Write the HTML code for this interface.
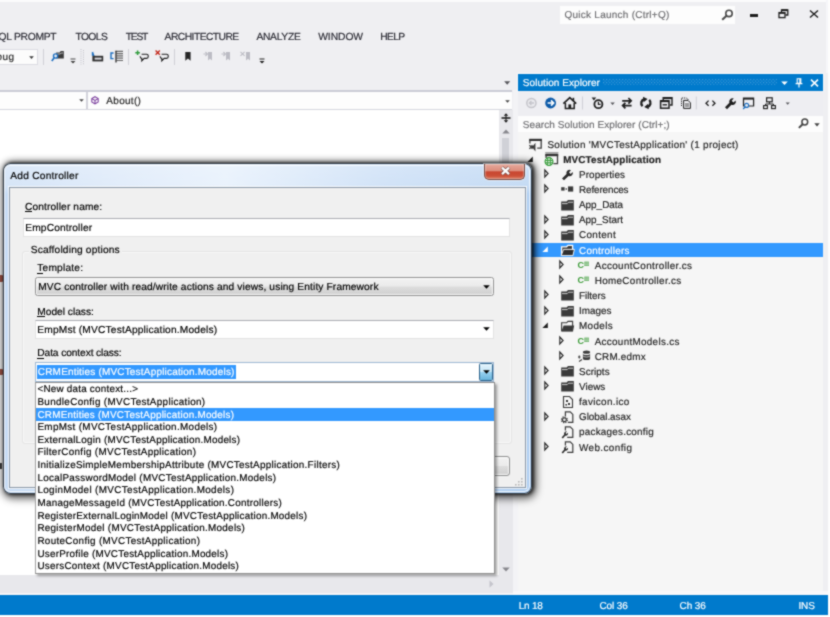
<!DOCTYPE html>
<html><head><meta charset="utf-8"><title>Add Controller</title>
<style>
html,body{margin:0;padding:0;}
body{width:830px;height:617px;position:relative;overflow:hidden;background:#efeff2;font-family:"Liberation Sans",sans-serif;}
.t{position:absolute;white-space:pre;font-family:"Liberation Sans",sans-serif;display:block;-webkit-text-stroke:0.18px currentColor;text-rendering:geometricPrecision;}
.b{position:absolute;}
.a{position:absolute;overflow:visible;}
#wrap{position:absolute;left:0;top:0;width:830px;height:617px;background:#efeff2;overflow:hidden;filter:url(#soft);}
</style></head><body><div id="wrap">
<svg width="0" height="0" style="position:absolute">
<defs>
<filter id="soft" x="0" y="0" width="100%" height="100%" color-interpolation-filters="sRGB"><feConvolveMatrix order="3" kernelMatrix="0.04 0.1 0.04 0.1 0.44 0.1 0.04 0.1 0.04" divisor="1" edgeMode="duplicate" preserveAlpha="true"/></filter>
<g id="i-folder"><path d="M1.2 3.6 H6.6 L8 2 H13.8 V12.4 H1.2 Z" fill="#3a3a3a"/><path d="M2 5.6 H7.2 L8.6 4.2 H13" stroke="#f6f6f6" stroke-width="0.8" fill="none"/></g>
<g id="i-folderopen"><path d="M1.6 3.8 H6.6 L8 2.4 H12.6 V11.8 H1.6 Z" fill="#f6f6f6" stroke="#3a3a3a" stroke-width="1.1"/><path d="M3.6 6.4 H14.2 L12.8 12.4 H1.4 Z" fill="#3a3a3a"/></g>
<g id="i-folderopensel"><path d="M1.6 3.8 H6.6 L8 2.4 H12.6 V11.8 H1.6 Z" fill="#3a3a3a" stroke="#ffffff" stroke-width="1.3"/><path d="M3.6 6.4 H14.4 L12.9 12.6 H1.2 Z" fill="#2f2f2f" stroke="#ffffff" stroke-width="0.9"/></g>
<g id="i-cs"><text x="0.6" y="10.4" font-family="Liberation Sans" font-weight="700" font-size="9" fill="#3a9a36">C</text><rect x="7.4" y="3.6" width="4.4" height="4.4" fill="#3a9a36" opacity="0.85"/><path d="M8.9 3.6 v4.4 M10.3 3.6 v4.4 M7.4 5.1 h4.4 M7.4 6.5 h4.4" stroke="#f6f6f6" stroke-width="0.45" opacity="0.8"/></g>
<g id="i-wrench"><path d="M2 11.5 L6.5 7 A3.2 3.2 0 0 1 11 3.2 L9 5.3 L10.6 6.9 L12.7 4.9 A3.2 3.2 0 0 1 8.6 9 L4 13.3 Z" fill="#2b2b2b"/></g>
<g id="i-refs"><rect x="1.2" y="5.2" width="3.4" height="3.4" fill="#3b3b3b"/><rect x="5.6" y="6.3" width="1.4" height="1.4" fill="#3b3b3b"/><rect x="8" y="4.4" width="5.2" height="5.2" fill="#3b3b3b"/></g>
<g id="i-sln"><path d="M1.9 6.4 V2.6 H13.2 V11.2 H9.2" fill="none" stroke="#3b3b3b" stroke-width="1.3"/><path d="M1.3 2.9 H13.8" stroke="#333" stroke-width="2.2"/><path d="M1.4 8.2 L3.4 10 L1.4 11.8 M3.6 11.8 L6.8 7.6 V12.6 L3.6 8.2" fill="none" stroke="#333" stroke-width="1.25"/></g>
<g id="i-proj"><path d="M1.2 0.5 H14.4" stroke="#9a9a9a" stroke-width="0.9"/><path d="M2.1 6 V2.6 H13.5 V11.6 H9.4" fill="none" stroke="#3b3b3b" stroke-width="1.3"/><path d="M1.4 2.9 H14.2" stroke="#333" stroke-width="2.6"/><circle cx="5" cy="9.6" r="3.9" fill="#f6f6f6" stroke="#2f9a33" stroke-width="1.2"/><path d="M1.2 8.4 H8.8 M1.2 10.8 H8.8 M3.7 6 V13.2 M6.3 6 V13.2" stroke="#2f9a33" stroke-width="0.95" fill="none"/></g>
<g id="i-ico"><path d="M3.5 1.5 h6 l3 3 v8 h-9 z" fill="#f6f6f6" stroke="#3b3b3b" stroke-width="1.1"/><rect x="6" y="5" width="2" height="2" fill="#3b3b3b"/><rect x="8" y="8" width="2" height="2" fill="#3b3b3b"/><rect x="5.4" y="9" width="1.6" height="1.6" fill="#3b3b3b"/></g>
<g id="i-asax"><path d="M5.4 6 V1.8 h4.8 l2.6 2.6 v8 h-5" fill="none" stroke="#3b3b3b" stroke-width="1.2"/><circle cx="4.4" cy="9.8" r="2.9" fill="none" stroke="#3b3b3b" stroke-width="1.3" stroke-dasharray="1.2 1.07"/><circle cx="4.4" cy="9.8" r="1.9" fill="none" stroke="#3b3b3b" stroke-width="1.2"/></g>
<g id="i-config"><path d="M5.4 5.6 V1.8 h4.8 l2.6 2.6 v8 h-5.6" fill="none" stroke="#3b3b3b" stroke-width="1.2"/><path d="M1.6 12.4 L4.2 9.6 A2.4 2.4 0 0 1 6.8 6.4 L5.5 7.9 L6.5 9 L8 7.8 A2.4 2.4 0 0 1 5.2 10.8 L2.9 13.4 Z" fill="#2b2b2b"/></g>
<g id="i-edmx"><ellipse cx="9.5" cy="3.2" rx="3.6" ry="1.6" fill="#3b3b3b"/><path d="M5.9 4.4 v5 a3.6 1.6 0 0 0 7.2 0 v-5 a3.6 1.6 0 0 1 -7.2 0" fill="#3b3b3b"/><path d="M5.9 6.6 a3.6 1.4 0 0 0 7.2 0" stroke="#f6f6f6" stroke-width="0.7" fill="none"/><path d="M1 8 l2.5 0 m-1.2 -1.5 v3 M2 12.5 l3 -2" stroke="#3b3b3b" stroke-width="1.1"/></g>
</defs></svg>

<!-- top strip -->
<div class="b" style="left:-6px;top:-6px;width:842px;height:8px;background:#fbfbfc"></div>
<div class="b" style="left:828px;top:-6px;width:8px;height:629px;background:#fdfdfd;z-index:50"></div>

<div class="b" style="left:825.6px;top:0;width:3px;height:73px;background:#f6f6f9"></div>
<!-- quick launch -->
<div class="b" style="left:560px;top:6px;width:175px;height:18px;background:#fdfdfd"></div>
<svg class="a" style="left:720.6px;top:9.2px" width="13" height="12" viewBox="0 0 13 12"><circle cx="8" cy="4.4" r="3.2" fill="none" stroke="#4a4a4a" stroke-width="1.6"/><path d="M5.6 6.8 L1.2 10.8" stroke="#4a4a4a" stroke-width="2.1"/></svg>
<!-- window buttons -->
<div class="b" style="left:750px;top:13.9px;width:8.4px;height:3.2px;background:#1e1e1e"></div>
<svg class="a" style="left:778px;top:9px" width="11" height="10" viewBox="0 0 11 10"><path d="M3.5 3 V1 H9.8 V6 H7.5" fill="none" stroke="#1e1e1e" stroke-width="1.3"/><path d="M3.5 1.2 H9.8" stroke="#1e1e1e" stroke-width="1.8"/><rect x="1" y="3.6" width="6" height="5" fill="none" stroke="#1e1e1e" stroke-width="1.3"/><path d="M1 3.9 H7" stroke="#1e1e1e" stroke-width="1.8"/></svg>
<svg class="a" style="left:808.5px;top:10px" width="10" height="8" viewBox="0 0 10 8"><path d="M1 0.5 L9 7.5 M9 0.5 L1 7.5" stroke="#1e1e1e" stroke-width="1.4"/></svg>

<!-- toolbar -->
<div class="b" style="left:-6px;top:48.5px;width:43.5px;height:16px;background:#fcfcfc;border:1px solid #dcdce2;border-left:none;box-sizing:border-box"></div>
<svg class="a" style="left:29.3px;top:55.6px" width="6" height="4"><path d="M0.2 0.2 H4.8 L2.5 3 Z" fill="#3a3a3a"/></svg>
<div class="b" style="left:43.3px;top:48.5px;width:1px;height:16px;background:#cfcfd6"></div>
<!-- find in files icon -->
<svg class="a" style="left:51px;top:49px" width="14" height="14" viewBox="0 0 14 14"><path d="M5.2 3.4 H8.6 L9.8 2 H12.8 V9.6 H5.2 Z" fill="#3a3a3a"/><path d="M6.2 5 H9.2 L10.2 4 H12" stroke="#eeeef2" stroke-width="0.7" fill="none"/><circle cx="4.6" cy="7" r="2.1" fill="#eeeef2" stroke="#1d6fc0" stroke-width="1.4"/><path d="M3.2 8.8 L0.8 12" stroke="#1d6fc0" stroke-width="1.7"/></svg>
<svg class="a" style="left:70.4px;top:58px" width="6" height="7"><path d="M0.5 1 H5.5" stroke="#444" stroke-width="1"/><path d="M0.5 3 H5.5 L3 5.6 Z" fill="#444"/></svg>
<svg class="a" style="left:80px;top:48.5px" width="5" height="16"><path d="M1 0 V16 M3.5 1.1 V16" stroke="#c0c0c8" stroke-width="1" stroke-dasharray="1 1.2"/></svg>
<!-- icon 2 -->
<svg class="a" style="left:90.5px;top:50px" width="13" height="12" viewBox="0 0 13 12"><path d="M0.8 1.8 L3.8 5.8 L0.8 5.8 Z" fill="#1d6fc0"/><path d="M1.6 2 L2.6 6" stroke="#1d6fc0" stroke-width="1.2"/><rect x="1.4" y="5.8" width="10.8" height="5.6" fill="#2e2e2e"/><rect x="3.6" y="7.6" width="7" height="2" fill="#d8d8de"/></svg>
<!-- icon 3 -->
<svg class="a" style="left:109.5px;top:49.5px" width="14" height="13" viewBox="0 0 14 13"><path d="M3.6 3 H1 V8.6 H3.6" fill="none" stroke="#1d6fc0" stroke-width="1.4"/><path d="M5.6 1.3 H13 M6.4 3.6 H13 M6.4 5.9 H13 M6.4 8.2 H13 M6.4 10.5 H13" stroke="#666" stroke-width="1.2"/><path d="M6 0.8 V12.4" stroke="#2a2a2a" stroke-width="1.3"/></svg>
<div class="b" style="left:128px;top:48.5px;width:1px;height:16px;background:#cfcfd6"></div>
<!-- comment -->
<svg class="a" style="left:134.5px;top:49.5px" width="15" height="13" viewBox="0 0 15 13"><path d="M2.6 0.4 V5 M0.3 2.7 H4.9" stroke="#2d9a3a" stroke-width="1.5"/><path d="M6.6 4.2 H11.6 Q13.2 4.2 13.2 5.8 V6.8 Q13.2 8.4 11.6 8.4 H9.2 L6.8 10.8 V8.4 Q5.2 8.4 5.2 6.8 V6.2" fill="none" stroke="#1e1e1e" stroke-width="1.1"/></svg>
<!-- uncomment -->
<svg class="a" style="left:154.5px;top:49.5px" width="15" height="13" viewBox="0 0 15 13"><path d="M0.6 0.6 L4.8 4.8 M4.8 0.6 L0.6 4.8" stroke="#c3281c" stroke-width="1.4"/><path d="M6.6 4.2 H11.6 Q13.2 4.2 13.2 5.8 V6.8 Q13.2 8.4 11.6 8.4 H9.2 L6.8 10.8 V8.4 Q5.2 8.4 5.2 6.8 V6.2" fill="none" stroke="#1e1e1e" stroke-width="1.1"/></svg>
<div class="b" style="left:174px;top:48.5px;width:1px;height:16px;background:#cfcfd6"></div>
<!-- bookmark -->
<svg class="a" style="left:184.6px;top:51.8px" width="7" height="10"><path d="M0.3 0 H5.6 V8.8 L2.95 6.4 L0.3 8.8 Z" fill="#262626"/></svg>
<!-- disabled icons -->
<svg class="a" style="left:203px;top:51px" width="10" height="11" viewBox="0 0 10 11"><path d="M5 1 H9 V9.5 L7 7.8 L5 9.5 Z" fill="#bcbcc4"/><path d="M0.5 3 L4 3 M2.5 1 L4.4 3 L2.5 5" stroke="#bcbcc4" stroke-width="1.1" fill="none"/></svg>
<svg class="a" style="left:221px;top:51px" width="10" height="11" viewBox="0 0 10 11"><path d="M5 1 H9 V9.5 L7 7.8 L5 9.5 Z" fill="#bcbcc4"/><path d="M0.5 3 L4 3 M2.5 1 L4.4 3 L2.5 5" stroke="#bcbcc4" stroke-width="1.1" fill="none"/></svg>
<svg class="a" style="left:240px;top:51px" width="11" height="11" viewBox="0 0 11 11"><path d="M6 1 H10 V9.5 L8 7.8 L6 9.5 Z" fill="#bcbcc4"/><path d="M0.5 0.8 L4.6 4.8 M4.6 0.8 L0.5 4.8" stroke="#bcbcc4" stroke-width="1.1" fill="none"/></svg>
<svg class="a" style="left:258.5px;top:58px" width="6" height="6"><path d="M0.5 1 H5.5" stroke="#1e1e1e" stroke-width="1"/><path d="M0.5 3 H5.5 L3 5.6 Z" fill="#1e1e1e"/></svg>

<!-- doc tab dropdown arrow -->
<svg class="a" style="left:504px;top:80.6px" width="7" height="5"><path d="M0.2 0.3 H6.2 L3.2 3.8 Z" fill="#55555a"/></svg>

<!-- nav bar -->
<div class="b" style="left:-6px;top:89.6px;width:518.4px;height:2px;background:#cbccd6"></div>
<div class="b" style="left:-6px;top:91.6px;width:518.4px;height:17px;background:#fdfdfd"></div>
<div class="b" style="left:-6px;top:109px;width:518.4px;height:1px;background:#d6d7de"></div>
<div class="b" style="left:86px;top:91.6px;width:1.8px;height:17px;background:#d3d4dc"></div>
<svg class="a" style="left:78.9px;top:99.2px" width="6" height="4"><path d="M0.2 0.2 H4.8 L2.5 2.8 Z" fill="#444"/></svg>
<svg class="a" style="left:505.4px;top:99.5px" width="6" height="4"><path d="M0.2 0.2 H4.8 L2.5 2.8 Z" fill="#444"/></svg>
<svg class="a" style="left:90.5px;top:96px" width="8" height="9" viewBox="0 0 8 9"><path d="M4 0.7 L7.2 2.6 V6 L4 8 L0.8 6 V2.6 Z M0.8 2.6 L4 4.4 L7.2 2.6 M4 4.4 V8" fill="none" stroke="#7a3e9d" stroke-width="1.05"/></svg>

<!-- editor -->
<div class="b" style="left:-6px;top:110px;width:505px;height:465.4px;background:#ffffff"></div>
<!-- editor vertical scrollbar -->
<div class="b" style="left:499px;top:110px;width:14px;height:465.4px;background:#e8e8ec"></div>
<svg class="a" style="left:500.5px;top:112.5px" width="10" height="10" viewBox="0 0 10 10"><path d="M0.5 5 H9.5" stroke="#1e1e1e" stroke-width="1.6"/><path d="M5 0.3 L7.3 2.8 H2.7 Z M5 9.7 L7.3 7.2 H2.7 Z" fill="#1e1e1e"/><path d="M5 2 V8" stroke="#1e1e1e" stroke-width="1.1"/></svg>
<svg class="a" style="left:501.5px;top:128.5px" width="8" height="5"><path d="M0.3 4.5 H7.7 L4 0.5 Z" fill="#86868c"/></svg>
<div class="b" style="left:502px;top:138px;width:7px;height:60px;background:#d0d1d7"></div>
<svg class="a" style="left:501.5px;top:566.7px" width="8" height="5"><path d="M0.3 0.5 H7.7 L4 4.5 Z" fill="#86868c"/></svg>
<!-- editor bottom (h scrollbar) -->
<div class="b" style="left:-6px;top:575.4px;width:519px;height:20.2px;background:#e8e8ec"></div>
<svg class="a" style="left:488.5px;top:579.5px" width="5" height="8"><path d="M0.5 0.3 V7.7 L4.5 4 Z" fill="#c4c4cb"/></svg>
<!-- left code fragments -->
<div class="b" style="left:-2px;top:274.5px;width:4.5px;height:7px;background:#a85a4c;border-radius:1px"></div>
<div class="b" style="left:-2px;top:368.5px;width:4.5px;height:6px;background:#a85a4c;border-radius:1px"></div>
<div class="b" style="left:0;top:463px;width:1.5px;height:6px;background:#444"></div>

<div class="b" style="left:512.6px;top:90px;width:5.2px;height:505px;background:#f3f3f6"></div>
<!-- Solution Explorer -->
<div class="b" style="left:517.6px;top:73px;width:305.8px;height:522.6px;background:#f6f6f6"></div>
<div class="b" style="left:518.2px;top:73.5px;width:304.8px;height:17px;background:#007acc;box-shadow:0 0 0 0.8px #f7f9fc"></div>
<svg class="a" style="left:603px;top:79.4px" width="174" height="6"><defs><pattern id="dots" width="3.2" height="3.2" patternUnits="userSpaceOnUse"><rect x="0" y="0" width="1" height="1" fill="#4c9fd9"/><rect x="1.6" y="1.6" width="1" height="1" fill="#4c9fd9"/></pattern></defs><rect width="174" height="6" fill="url(#dots)"/></svg>
<svg class="a" style="left:780.5px;top:80.5px" width="7" height="5"><path d="M0.2 0.4 H6.8 L3.5 4 Z" fill="#fff"/></svg>
<svg class="a" style="left:794.5px;top:77.5px" width="8" height="10" viewBox="0 0 8 10"><path d="M2.2 0.8 H5.8 V5.4 H2.2 Z" fill="none" stroke="#fff" stroke-width="1.1"/><path d="M5 0.8 V5.4" stroke="#fff" stroke-width="1.4"/><path d="M0.6 5.6 H7.4 M4 5.6 V9.6" stroke="#fff" stroke-width="1.2"/></svg>
<svg class="a" style="left:809.5px;top:78.5px" width="9" height="8"><path d="M1 0.6 L8 7.4 M8 0.6 L1 7.4" stroke="#fff" stroke-width="1.6"/></svg>
<!-- SE toolbar -->
<div class="b" style="left:517.6px;top:90.6px;width:305.8px;height:25.6px;background:#eeeef2"></div>
<svg class="a" style="left:525px;top:96px" width="270" height="14" viewBox="0 0 270 14">
 <!-- back (disabled) -->
 <circle cx="6.4" cy="7" r="4.6" fill="#eaeaee" stroke="#c4c4ca" stroke-width="1.5"/><path d="M9 7 H4.6 M6.4 5 L4.4 7 L6.4 9" stroke="#c4c4ca" stroke-width="1.3" fill="none"/>
 <!-- forward -->
 <circle cx="25.6" cy="7" r="5.4" fill="#0c5aa8"/><path d="M22.6 7 H28 M26 4.4 L28.6 7 L26 9.6" stroke="#fff" stroke-width="1.7" fill="none"/>
 <!-- home -->
 <path d="M38.4 7.6 L44.8 1.6 L51.2 7.6" fill="none" stroke="#1e1e1e" stroke-width="1.7"/><path d="M40.4 7 V12.6 H49.2 V7" fill="none" stroke="#1e1e1e" stroke-width="1.5"/><path d="M48.4 1.8 V5" stroke="#1e1e1e" stroke-width="1.6"/><rect x="43.4" y="8.4" width="2.8" height="4.2" fill="#1e1e1e"/>
 <path d="M57.5 0.5 V13.5" stroke="#cfcfd6" stroke-width="1"/>
 <!-- clock -->
 <circle cx="73.4" cy="8.2" r="4" fill="none" stroke="#1e1e1e" stroke-width="1.8"/><path d="M73.4 5.8 V8.4 H75.6" stroke="#1e1e1e" stroke-width="1.2" fill="none"/><path d="M66.6 1.6 L71.2 1.6 L68.9 4.6 Z" fill="#1e1e1e"/>
 <path d="M85.4 6.6 H89.8 L87.6 9 Z" fill="#55555a"/>
 <!-- sync -->
 <path d="M97.2 4.8 H106 M103.4 2 L106.2 4.8 L103.4 7.6 M106.6 9.6 H97.8 M100.4 6.8 L97.6 9.6 L100.4 12.4" fill="none" stroke="#1e1e1e" stroke-width="1.7"/>
 <!-- refresh -->
 <path d="M117.6 10.2 A4.1 4.1 0 0 1 119.4 3.2 M124.2 3.8 A4.1 4.1 0 0 1 122.4 10.8" fill="none" stroke="#1e1e1e" stroke-width="2.3"/><path d="M118 0.8 L122.6 3 L118.6 6.2 Z M123.8 13.2 L119.2 11 L123.2 7.8 Z" fill="#1e1e1e"/>
 <!-- collapse all -->
 <path d="M138.2 4 V1.8 H147 V9 H145" fill="none" stroke="#1e1e1e" stroke-width="1.4"/><path d="M138.2 2.2 H147" stroke="#1e1e1e" stroke-width="1.8"/><rect x="135.6" y="4.8" width="8.4" height="7.4" fill="#eeeef2" stroke="#1e1e1e" stroke-width="1.5"/><path d="M135.6 5.2 H144" stroke="#1e1e1e" stroke-width="1.9"/><path d="M137.6 8.8 H142" stroke="#1e1e1e" stroke-width="1.4"/>
 <!-- show all files -->
 <path d="M156.5 10 V2 H161.5 L163.5 4" fill="none" stroke="#1e1e1e" stroke-width="1" stroke-dasharray="1.2 0.9"/><path d="M158.6 4.4 H163 L165.4 6.8 V12.4 H158.6 Z" fill="none" stroke="#1e1e1e" stroke-width="1"/><path d="M160 8 H164 M160 10 H164" stroke="#1e1e1e" stroke-width="0.8"/>
 <path d="M171.3 0.5 V13.5" stroke="#cfcfd6" stroke-width="1"/>
 <!-- code <> -->
 <path d="M183.6 4.6 L181 7.2 L183.6 9.8 M187.4 4.6 L190 7.2 L187.4 9.8" fill="none" stroke="#1e1e1e" stroke-width="1.3"/>
 <!-- wrench -->
 <path d="M200 11.2 L204.4 6.8 A3.3 3.3 0 0 1 208.8 2.6 L206.6 4.8 L208.4 6.6 L210.6 4.4 A3.3 3.3 0 0 1 206.4 8.8 L202 13.2 Z" fill="#1e1e1e"/>
 <!-- preview -->
 <path d="M218.5 10.5 V2.2 H228.6 V10 H224" fill="none" stroke="#1e1e1e" stroke-width="1.2"/><path d="M218.5 2.8 H228.6" stroke="#1e1e1e" stroke-width="1.6"/><circle cx="221.6" cy="9.4" r="2" fill="#eeeef2" stroke="#1d6fc0" stroke-width="1.1"/><path d="M220.2 10.8 L218.2 13" stroke="#1d6fc0" stroke-width="1.3"/>
 <!-- class diagram -->
 <rect x="241.6" y="1.8" width="5.6" height="4" fill="none" stroke="#1e1e1e" stroke-width="1.2"/><path d="M244.4 5.8 V8 M240.6 10 V8 H248.4 V10" fill="none" stroke="#1e1e1e" stroke-width="1"/><rect x="238.6" y="9.6" width="3.8" height="3" fill="none" stroke="#1e1e1e" stroke-width="1.1"/><rect x="246.6" y="9.6" width="3.8" height="3" fill="none" stroke="#1e1e1e" stroke-width="1.1"/>
 <path d="M260.6 6.4 H264.8 L262.7 8.8 Z" fill="#55555a"/>
</svg>
<!-- SE search -->
<div class="b" style="left:518.2px;top:116.2px;width:304.8px;height:16px;background:#fdfdfd"></div>
<svg class="a" style="left:798.4px;top:118.4px" width="11" height="11" viewBox="0 0 11 11"><circle cx="6.8" cy="4" r="2.9" fill="none" stroke="#444" stroke-width="1.5"/><path d="M4.6 6.2 L0.9 9.9" stroke="#444" stroke-width="2"/></svg>
<svg class="a" style="left:813.8px;top:123px" width="6" height="4"><path d="M0.3 0.3 H5.7 L3 3.4 Z" fill="#444"/></svg>
<!-- selected row -->
<div class="b" style="left:518.7px;top:242.6px;width:304.6px;height:14.8px;background:#3399ff"></div>
<svg class="a" style="left:528.3px;top:136.9px" width="16" height="14" viewBox="0 0 16 14"><use href="#i-sln"/></svg>
<svg class="a" style="left:526.6px;top:155.5px" width="8" height="8" viewBox="0 0 8 8"><path d="M5.8 0.6 L5.8 6 L0.4 6 Z" fill="#1e1e1e"/></svg>
<svg class="a" style="left:544.0px;top:152.1px" width="16" height="14" viewBox="0 0 16 14"><use href="#i-proj"/></svg>
<svg class="a" style="left:543.6px;top:169.2px" width="6" height="10" viewBox="0 0 6 10"><path d="M0.8 1.0 L4.1 4.5 L0.8 8.0 Z" fill="#f6f6f6" stroke="#2a2a2a" stroke-width="1.15"/></svg>
<svg class="a" style="left:560.3px;top:167.2px" width="16" height="14" viewBox="0 0 16 14"><use href="#i-wrench"/></svg>
<svg class="a" style="left:543.6px;top:184.4px" width="6" height="10" viewBox="0 0 6 10"><path d="M0.8 1.0 L4.1 4.5 L0.8 8.0 Z" fill="#f6f6f6" stroke="#2a2a2a" stroke-width="1.15"/></svg>
<svg class="a" style="left:560.3px;top:182.4px" width="16" height="14" viewBox="0 0 16 14"><use href="#i-refs"/></svg>
<svg class="a" style="left:560.3px;top:197.5px" width="16" height="14" viewBox="0 0 16 14"><use href="#i-folder"/></svg>
<svg class="a" style="left:543.6px;top:214.7px" width="6" height="10" viewBox="0 0 6 10"><path d="M0.8 1.0 L4.1 4.5 L0.8 8.0 Z" fill="#f6f6f6" stroke="#2a2a2a" stroke-width="1.15"/></svg>
<svg class="a" style="left:560.3px;top:212.7px" width="16" height="14" viewBox="0 0 16 14"><use href="#i-folder"/></svg>
<svg class="a" style="left:543.6px;top:229.8px" width="6" height="10" viewBox="0 0 6 10"><path d="M0.8 1.0 L4.1 4.5 L0.8 8.0 Z" fill="#f6f6f6" stroke="#2a2a2a" stroke-width="1.15"/></svg>
<svg class="a" style="left:560.3px;top:227.8px" width="16" height="14" viewBox="0 0 16 14"><use href="#i-folder"/></svg>
<svg class="a" style="left:542.3px;top:246.4px" width="8" height="8" viewBox="0 0 8 8"><path d="M5.8 0.6 L5.8 6 L0.4 6 Z" fill="#ffffff"/></svg>
<svg class="a" style="left:560.3px;top:243.0px" width="16" height="14" viewBox="0 0 16 14"><use href="#i-folderopensel"/></svg>
<svg class="a" style="left:559.3px;top:260.1px" width="6" height="10" viewBox="0 0 6 10"><path d="M0.8 1.0 L4.1 4.5 L0.8 8.0 Z" fill="#f6f6f6" stroke="#2a2a2a" stroke-width="1.15"/></svg>
<svg class="a" style="left:576.6px;top:258.1px" width="16" height="14" viewBox="0 0 16 14"><use href="#i-cs"/></svg>
<svg class="a" style="left:559.3px;top:275.3px" width="6" height="10" viewBox="0 0 6 10"><path d="M0.8 1.0 L4.1 4.5 L0.8 8.0 Z" fill="#f6f6f6" stroke="#2a2a2a" stroke-width="1.15"/></svg>
<svg class="a" style="left:576.6px;top:273.3px" width="16" height="14" viewBox="0 0 16 14"><use href="#i-cs"/></svg>
<svg class="a" style="left:543.6px;top:290.4px" width="6" height="10" viewBox="0 0 6 10"><path d="M0.8 1.0 L4.1 4.5 L0.8 8.0 Z" fill="#f6f6f6" stroke="#2a2a2a" stroke-width="1.15"/></svg>
<svg class="a" style="left:560.3px;top:288.4px" width="16" height="14" viewBox="0 0 16 14"><use href="#i-folder"/></svg>
<svg class="a" style="left:543.6px;top:305.6px" width="6" height="10" viewBox="0 0 6 10"><path d="M0.8 1.0 L4.1 4.5 L0.8 8.0 Z" fill="#f6f6f6" stroke="#2a2a2a" stroke-width="1.15"/></svg>
<svg class="a" style="left:560.3px;top:303.6px" width="16" height="14" viewBox="0 0 16 14"><use href="#i-folder"/></svg>
<svg class="a" style="left:542.3px;top:322.2px" width="8" height="8" viewBox="0 0 8 8"><path d="M5.8 0.6 L5.8 6 L0.4 6 Z" fill="#1e1e1e"/></svg>
<svg class="a" style="left:560.3px;top:318.8px" width="16" height="14" viewBox="0 0 16 14"><use href="#i-folderopen"/></svg>
<svg class="a" style="left:559.3px;top:335.9px" width="6" height="10" viewBox="0 0 6 10"><path d="M0.8 1.0 L4.1 4.5 L0.8 8.0 Z" fill="#f6f6f6" stroke="#2a2a2a" stroke-width="1.15"/></svg>
<svg class="a" style="left:576.6px;top:333.9px" width="16" height="14" viewBox="0 0 16 14"><use href="#i-cs"/></svg>
<svg class="a" style="left:559.3px;top:351.1px" width="6" height="10" viewBox="0 0 6 10"><path d="M0.8 1.0 L4.1 4.5 L0.8 8.0 Z" fill="#f6f6f6" stroke="#2a2a2a" stroke-width="1.15"/></svg>
<svg class="a" style="left:576.6px;top:349.1px" width="16" height="14" viewBox="0 0 16 14"><use href="#i-edmx"/></svg>
<svg class="a" style="left:543.6px;top:366.2px" width="6" height="10" viewBox="0 0 6 10"><path d="M0.8 1.0 L4.1 4.5 L0.8 8.0 Z" fill="#f6f6f6" stroke="#2a2a2a" stroke-width="1.15"/></svg>
<svg class="a" style="left:560.3px;top:364.2px" width="16" height="14" viewBox="0 0 16 14"><use href="#i-folder"/></svg>
<svg class="a" style="left:543.6px;top:381.4px" width="6" height="10" viewBox="0 0 6 10"><path d="M0.8 1.0 L4.1 4.5 L0.8 8.0 Z" fill="#f6f6f6" stroke="#2a2a2a" stroke-width="1.15"/></svg>
<svg class="a" style="left:560.3px;top:379.4px" width="16" height="14" viewBox="0 0 16 14"><use href="#i-folder"/></svg>
<svg class="a" style="left:560.3px;top:394.5px" width="16" height="14" viewBox="0 0 16 14"><use href="#i-ico"/></svg>
<svg class="a" style="left:543.6px;top:411.7px" width="6" height="10" viewBox="0 0 6 10"><path d="M0.8 1.0 L4.1 4.5 L0.8 8.0 Z" fill="#f6f6f6" stroke="#2a2a2a" stroke-width="1.15"/></svg>
<svg class="a" style="left:560.3px;top:409.7px" width="16" height="14" viewBox="0 0 16 14"><use href="#i-asax"/></svg>
<svg class="a" style="left:560.3px;top:424.8px" width="16" height="14" viewBox="0 0 16 14"><use href="#i-config"/></svg>
<svg class="a" style="left:543.6px;top:442.0px" width="6" height="10" viewBox="0 0 6 10"><path d="M0.8 1.0 L4.1 4.5 L0.8 8.0 Z" fill="#f6f6f6" stroke="#2a2a2a" stroke-width="1.15"/></svg>
<svg class="a" style="left:560.3px;top:440.0px" width="16" height="14" viewBox="0 0 16 14"><use href="#i-config"/></svg>

<div class="b" style="left:513px;top:590.5px;width:315px;height:5px;background:#f8f8fa"></div>
<div class="b" style="left:-6px;top:593.4px;width:519px;height:2px;background:#f4f4f7"></div>
<!-- status bar -->
<div class="b" style="left:-6px;top:595.3px;width:834px;height:19.3px;background:#007acc"></div>
<div class="b" style="left:-6px;top:614.6px;width:842px;height:9px;background:#fdfdfd"></div>

<!-- ============ dialog ============ -->
<div class="b" id="dlg" style="left:2.9px;top:163.3px;width:528.7px;height:330.6px;box-sizing:border-box;border:1.4px solid rgba(38,48,58,.92);border-radius:7.5px;background:linear-gradient(180deg,rgba(255,255,255,.38) 0px,rgba(255,255,255,.28) 22px,rgba(255,255,255,0) 30px),linear-gradient(90deg,#c6dbf4 0%,#d6e5f8 22%,#e1edfb 42%,#c0d8f4 72%,#aecdf0 100%);box-shadow:1.5px 0 3px 0.5px rgba(0,0,0,.6), 1.5px 0 7px 1.5px rgba(0,0,0,.4), 2px 3px 9px 2px rgba(0,0,0,.45);"></div>
<div class="b" style="left:4.3px;top:164.7px;width:525.9px;height:327.8px;border-radius:6px;box-shadow:inset 0 0 0 1px rgba(255,255,255,.7)"></div>
<!-- close button -->
<div class="b" style="left:484.2px;top:164px;width:40.8px;height:15.8px;border-radius:0 0 5px 5px;border:1px solid #744842;border-top:none;box-sizing:border-box;background:linear-gradient(180deg,#e6aa9d 0%,#dc8c7b 46%,#c8452f 52%,#cb4f37 78%,#dc7a5e 100%);box-shadow:inset 0 0 0 1px rgba(255,255,255,.3), 0 0 0 1px rgba(255,255,255,.45)"></div>
<svg class="a" style="left:500.3px;top:165.9px" width="11" height="10" viewBox="0 0 11 10"><path d="M1.9 1.5 L9.1 8.3 M9.1 1.5 L1.9 8.3" stroke="#6a4a46" stroke-width="3.6" /><path d="M2 1.6 L9 8.2 M9 1.6 L2 8.2" stroke="#fff" stroke-width="2.3"/></svg>
<!-- client -->
<div class="b" style="left:9.5px;top:188px;width:515.1px;height:299.2px;background:#f0f0f0;box-shadow:0 0 0 1px #8a98a8, 0 0 0 2px rgba(255,255,255,.75)"></div>
<!-- controller name textbox -->
<div class="b" style="left:23px;top:218px;width:487px;height:19px;background:#fff;border:1px solid #e3e3e3;border-top-color:#abadb3;box-sizing:border-box"></div>
<!-- group box -->
<div class="b" style="left:22px;top:250.5px;width:489.5px;height:193.5px;border:1px solid #e4e4e4;border-radius:3px;box-sizing:border-box;box-shadow:inset 0 0 0 1px #f8f8f8"></div>
<div class="b" style="left:28.5px;top:244px;width:93px;height:12px;background:#f0f0f0"></div>
<!-- template combo -->
<div class="b" style="left:35px;top:276.8px;width:458.8px;height:19.2px;border:1px solid #929292;border-radius:2.5px;box-sizing:border-box;background:linear-gradient(180deg,#f2f2f2 0%,#ebebeb 48%,#dddddd 52%,#cfcfcf 100%);box-shadow:inset 0 0 0 1px rgba(255,255,255,.8)"></div>
<svg class="a" style="left:482.8px;top:284.8px" width="7" height="4"><path d="M0.2 0.2 H6.8 L3.5 3.8 Z" fill="#000"/></svg>
<!-- model class combo -->
<div class="b" style="left:35px;top:320px;width:458.8px;height:18.6px;background:#fff;border:1px solid #e3e3e3;border-top-color:#abadb3;box-sizing:border-box"></div>
<svg class="a" style="left:482.8px;top:327.4px" width="7" height="4"><path d="M0.2 0.2 H6.8 L3.5 3.8 Z" fill="#000"/></svg>
<!-- data context combo -->
<div class="b" style="left:35px;top:362px;width:458.8px;height:19.6px;background:#fff;border:1px solid #9fb9d4;box-sizing:border-box"></div>
<div class="b" style="left:37px;top:365px;width:198.6px;height:13.6px;background:#3399ff"></div>
<div class="b" style="left:479.4px;top:363px;width:13.4px;height:18px;border:1px solid #2c628b;border-radius:1.5px;box-sizing:border-box;background:linear-gradient(180deg,#e5f4fc 0%,#c4e5f6 48%,#98d1ef 52%,#68b3db 100%)"></div>
<svg class="a" style="left:482.8px;top:370px" width="7" height="4"><path d="M0.2 0.2 H6.8 L3.5 3.8 Z" fill="#000"/></svg>
<!-- underlines for accelerators -->
<div class="b" style="left:25.2px;top:211.2px;width:6.4px;height:1px;background:#000"></div>
<div class="b" style="left:37.4px;top:272.8px;width:5.2px;height:1px;background:#000"></div>
<div class="b" style="left:37.4px;top:315.8px;width:8px;height:1px;background:#000"></div>
<div class="b" style="left:37.4px;top:357.8px;width:6.6px;height:1px;background:#000"></div>
<!-- button (partly hidden) -->
<div class="b" style="left:440px;top:456px;width:70.4px;height:20.4px;border:1px solid #8e8f8f;border-radius:3px;box-sizing:border-box;background:linear-gradient(180deg,#f2f2f2 0%,#ebebeb 48%,#dddddd 52%,#cfcfcf 100%);box-shadow:inset 0 0 0 1px rgba(255,255,255,.8)"></div>
<!-- resize grip -->
<svg class="a" style="left:513px;top:476px" width="11" height="11"><g fill="#b8b8b8"><rect x="8" y="2" width="1.6" height="1.6"/><rect x="5" y="5" width="1.6" height="1.6"/><rect x="8" y="5" width="1.6" height="1.6"/><rect x="2" y="8" width="1.6" height="1.6"/><rect x="5" y="8" width="1.6" height="1.6"/><rect x="8" y="8" width="1.6" height="1.6"/></g></svg>

<!-- dropdown list -->
<div class="b" style="left:35px;top:382px;width:460px;height:192.1px;background:#fff;border:1px solid #8f8f8f;border-left-color:#a2a2a2;box-sizing:border-box;z-index:20;box-shadow:1.5px 1.5px 2.5px rgba(0,0,0,.35)"></div>
<div class="b" style="left:36px;top:408px;width:458px;height:12.5px;background:#3399ff;z-index:21"></div>

<span class="t" style="left:-1.5px;top:31.0px;height:13px;line-height:13px;font-size:10.3px;letter-spacing:-0.274px;color:#2a2a33;">QL PROMPT</span>
<span class="t" style="left:75.4px;top:31.0px;height:13px;line-height:13px;font-size:10.3px;letter-spacing:-0.584px;color:#2a2a33;">TOOLS</span>
<span class="t" style="left:125.8px;top:31.0px;height:13px;line-height:13px;font-size:10.3px;letter-spacing:-1.282px;color:#2a2a33;">TEST</span>
<span class="t" style="left:164.6px;top:31.0px;height:13px;line-height:13px;font-size:10.3px;letter-spacing:-0.548px;color:#2a2a33;">ARCHITECTURE</span>
<span class="t" style="left:256.4px;top:31.0px;height:13px;line-height:13px;font-size:10.3px;letter-spacing:-0.296px;color:#2a2a33;">ANALYZE</span>
<span class="t" style="left:318.2px;top:31.0px;height:13px;line-height:13px;font-size:10.3px;letter-spacing:-0.065px;color:#2a2a33;">WINDOW</span>
<span class="t" style="left:380.3px;top:31.0px;height:13px;line-height:13px;font-size:10.3px;letter-spacing:-0.652px;color:#2a2a33;">HELP</span>
<span class="t" style="left:-3.6px;top:51.0px;height:13px;line-height:13px;font-size:10.0px;letter-spacing:0.504px;color:#1e1e1e;">bug</span>
<span class="t" style="left:106.3px;top:95.0px;height:13px;line-height:13px;font-size:10.0px;letter-spacing:0.300px;color:#1e1e1e;">About()</span>
<span class="t" style="left:564.5px;top:9.0px;height:13px;line-height:13px;font-size:10.0px;letter-spacing:0.249px;color:#6d6d70;">Quick Launch (Ctrl+Q)</span>
<span class="t" style="left:522.8px;top:77.0px;height:13px;line-height:13px;font-size:10.0px;letter-spacing:0.061px;color:#ffffff;">Solution Explorer</span>
<span class="t" style="left:522.8px;top:119.0px;height:13px;line-height:13px;font-size:10.0px;letter-spacing:0.081px;color:#6d6d70;">Search Solution Explorer (Ctrl+;)</span>
<span class="t" style="left:547.4px;top:139.0px;height:13px;line-height:13px;font-size:9.9px;letter-spacing:0.330px;color:#1e1e1e;">Solution 'MVCTestApplication' (1 project)</span>
<span class="t" style="left:563.2px;top:154.0px;height:13px;line-height:13px;font-size:9.9px;font-weight:700;letter-spacing:0.151px;color:#1e1e1e;">MVCTestApplication</span>
<span class="t" style="left:579.0px;top:169.0px;height:13px;line-height:13px;font-size:9.9px;letter-spacing:0.103px;color:#1e1e1e;">Properties</span>
<span class="t" style="left:579.0px;top:184.0px;height:13px;line-height:13px;font-size:9.9px;letter-spacing:-0.105px;color:#1e1e1e;">References</span>
<span class="t" style="left:579.0px;top:199.0px;height:13px;line-height:13px;font-size:9.9px;letter-spacing:0.016px;color:#1e1e1e;">App_Data</span>
<span class="t" style="left:579.0px;top:214.0px;height:13px;line-height:13px;font-size:9.9px;letter-spacing:0.014px;color:#1e1e1e;">App_Start</span>
<span class="t" style="left:579.0px;top:229.0px;height:13px;line-height:13px;font-size:9.9px;letter-spacing:0.351px;color:#1e1e1e;">Content</span>
<span class="t" style="left:579.0px;top:245.0px;height:13px;line-height:13px;font-size:9.9px;letter-spacing:0.264px;color:#ffffff;">Controllers</span>
<span class="t" style="left:594.7px;top:260.0px;height:13px;line-height:13px;font-size:9.9px;letter-spacing:0.357px;color:#1e1e1e;">AccountController.cs</span>
<span class="t" style="left:594.7px;top:275.0px;height:13px;line-height:13px;font-size:9.9px;letter-spacing:0.333px;color:#1e1e1e;">HomeController.cs</span>
<span class="t" style="left:579.0px;top:290.0px;height:13px;line-height:13px;font-size:9.9px;letter-spacing:-0.020px;color:#1e1e1e;">Filters</span>
<span class="t" style="left:579.0px;top:305.0px;height:13px;line-height:13px;font-size:9.9px;letter-spacing:0.027px;color:#1e1e1e;">Images</span>
<span class="t" style="left:579.0px;top:320.0px;height:13px;line-height:13px;font-size:9.9px;letter-spacing:0.368px;color:#1e1e1e;">Models</span>
<span class="t" style="left:594.7px;top:336.0px;height:13px;line-height:13px;font-size:9.9px;letter-spacing:0.304px;color:#1e1e1e;">AccountModels.cs</span>
<span class="t" style="left:594.7px;top:351.0px;height:13px;line-height:13px;font-size:9.9px;letter-spacing:0.214px;color:#1e1e1e;">CRM.edmx</span>
<span class="t" style="left:579.0px;top:366.0px;height:13px;line-height:13px;font-size:9.9px;letter-spacing:0.066px;color:#1e1e1e;">Scripts</span>
<span class="t" style="left:579.0px;top:381.0px;height:13px;line-height:13px;font-size:9.9px;letter-spacing:0.036px;color:#1e1e1e;">Views</span>
<span class="t" style="left:579.0px;top:396.0px;height:13px;line-height:13px;font-size:9.9px;letter-spacing:0.363px;color:#1e1e1e;">favicon.ico</span>
<span class="t" style="left:579.0px;top:411.0px;height:13px;line-height:13px;font-size:9.9px;letter-spacing:-0.028px;color:#1e1e1e;">Global.asax</span>
<span class="t" style="left:579.0px;top:426.0px;height:13px;line-height:13px;font-size:9.9px;letter-spacing:0.238px;color:#1e1e1e;">packages.config</span>
<span class="t" style="left:579.0px;top:442.0px;height:13px;line-height:13px;font-size:9.9px;letter-spacing:0.412px;color:#1e1e1e;">Web.config</span>
<span class="t" style="left:10.3px;top:170.0px;height:13px;line-height:13px;font-size:10.2px;letter-spacing:0.227px;color:#000;">Add Controller</span>
<span class="t" style="left:25.0px;top:201.0px;height:13px;line-height:13px;font-size:10.2px;letter-spacing:0.124px;color:#000;">Controller name:</span>
<span class="t" style="left:25.3px;top:222.0px;height:13px;line-height:13px;font-size:10.2px;letter-spacing:0.144px;color:#000;">EmpController</span>
<span class="t" style="left:30.7px;top:244.0px;height:13px;line-height:13px;font-size:10.2px;letter-spacing:0.173px;color:#000;">Scaffolding options</span>
<span class="t" style="left:37.3px;top:262.0px;height:13px;line-height:13px;font-size:10.2px;letter-spacing:0.192px;color:#000;">Template:</span>
<span class="t" style="left:38.2px;top:281.0px;height:13px;line-height:13px;font-size:10.2px;letter-spacing:0.128px;color:#000;">MVC controller with read/write actions and views, using Entity Framework</span>
<span class="t" style="left:37.3px;top:306.0px;height:13px;line-height:13px;font-size:10.2px;letter-spacing:-0.010px;color:#000;">Model class:</span>
<span class="t" style="left:37.3px;top:324.0px;height:13px;line-height:13px;font-size:10.2px;letter-spacing:0.182px;color:#000;">EmpMst (MVCTestApplication.Models)</span>
<span class="t" style="left:37.3px;top:347.0px;height:13px;line-height:13px;font-size:10.2px;letter-spacing:-0.094px;color:#000;">Data context class:</span>
<span class="t" style="left:37.8px;top:366.0px;height:13px;line-height:13px;font-size:10.0px;letter-spacing:0.187px;color:#fff;">CRMEntities (MVCTestApplication.Models)</span>
<span class="t" style="left:37.4px;top:383.0px;height:13px;line-height:13px;font-size:9.9px;letter-spacing:0.225px;color:#000;z-index:30;">&lt;New data context...&gt;</span>
<span class="t" style="left:37.4px;top:396.0px;height:13px;line-height:13px;font-size:9.9px;letter-spacing:0.337px;color:#000;z-index:30;">BundleConfig (MVCTestApplication)</span>
<span class="t" style="left:37.4px;top:409.0px;height:13px;line-height:13px;font-size:9.9px;letter-spacing:0.250px;color:#fff;z-index:30;">CRMEntities (MVCTestApplication.Models)</span>
<span class="t" style="left:37.4px;top:421.0px;height:13px;line-height:13px;font-size:9.9px;letter-spacing:0.342px;color:#000;z-index:30;">EmpMst (MVCTestApplication.Models)</span>
<span class="t" style="left:37.4px;top:434.0px;height:13px;line-height:13px;font-size:9.9px;letter-spacing:0.250px;color:#000;z-index:30;">ExternalLogin (MVCTestApplication.Models)</span>
<span class="t" style="left:37.4px;top:446.0px;height:13px;line-height:13px;font-size:9.9px;letter-spacing:0.325px;color:#000;z-index:30;">FilterConfig (MVCTestApplication)</span>
<span class="t" style="left:37.4px;top:459.0px;height:13px;line-height:13px;font-size:9.9px;letter-spacing:0.288px;color:#000;z-index:30;">InitializeSimpleMembershipAttribute (MVCTestApplication.Filters)</span>
<span class="t" style="left:37.4px;top:472.0px;height:13px;line-height:13px;font-size:9.9px;letter-spacing:0.280px;color:#000;z-index:30;">LocalPasswordModel (MVCTestApplication.Models)</span>
<span class="t" style="left:37.4px;top:484.0px;height:13px;line-height:13px;font-size:9.9px;letter-spacing:0.357px;color:#000;z-index:30;">LoginModel (MVCTestApplication.Models)</span>
<span class="t" style="left:37.4px;top:497.0px;height:13px;line-height:13px;font-size:9.9px;letter-spacing:0.259px;color:#000;z-index:30;">ManageMessageId (MVCTestApplication.Controllers)</span>
<span class="t" style="left:37.4px;top:510.0px;height:13px;line-height:13px;font-size:9.9px;letter-spacing:0.251px;color:#000;z-index:30;">RegisterExternalLoginModel (MVCTestApplication.Models)</span>
<span class="t" style="left:37.4px;top:522.0px;height:13px;line-height:13px;font-size:9.9px;letter-spacing:0.289px;color:#000;z-index:30;">RegisterModel (MVCTestApplication.Models)</span>
<span class="t" style="left:37.4px;top:535.0px;height:13px;line-height:13px;font-size:9.9px;letter-spacing:0.322px;color:#000;z-index:30;">RouteConfig (MVCTestApplication)</span>
<span class="t" style="left:37.4px;top:548.0px;height:13px;line-height:13px;font-size:9.9px;letter-spacing:0.251px;color:#000;z-index:30;">UserProfile (MVCTestApplication.Models)</span>
<span class="t" style="left:37.4px;top:560.0px;height:13px;line-height:13px;font-size:9.9px;letter-spacing:0.240px;color:#000;z-index:30;">UsersContext (MVCTestApplication.Models)</span>
<span class="t" style="left:518.8px;top:600.0px;height:13px;line-height:13px;font-size:10.0px;letter-spacing:-0.246px;color:#fff;">Ln 18</span>
<span class="t" style="left:599.4px;top:600.0px;height:13px;line-height:13px;font-size:10.0px;letter-spacing:-0.084px;color:#fff;">Col 36</span>
<span class="t" style="left:679.5px;top:600.0px;height:13px;line-height:13px;font-size:10.0px;letter-spacing:-0.078px;color:#fff;">Ch 36</span>
<span class="t" style="left:798.4px;top:600.0px;height:13px;line-height:13px;font-size:10.0px;letter-spacing:-0.124px;color:#fff;">INS</span>
</div></body></html>
